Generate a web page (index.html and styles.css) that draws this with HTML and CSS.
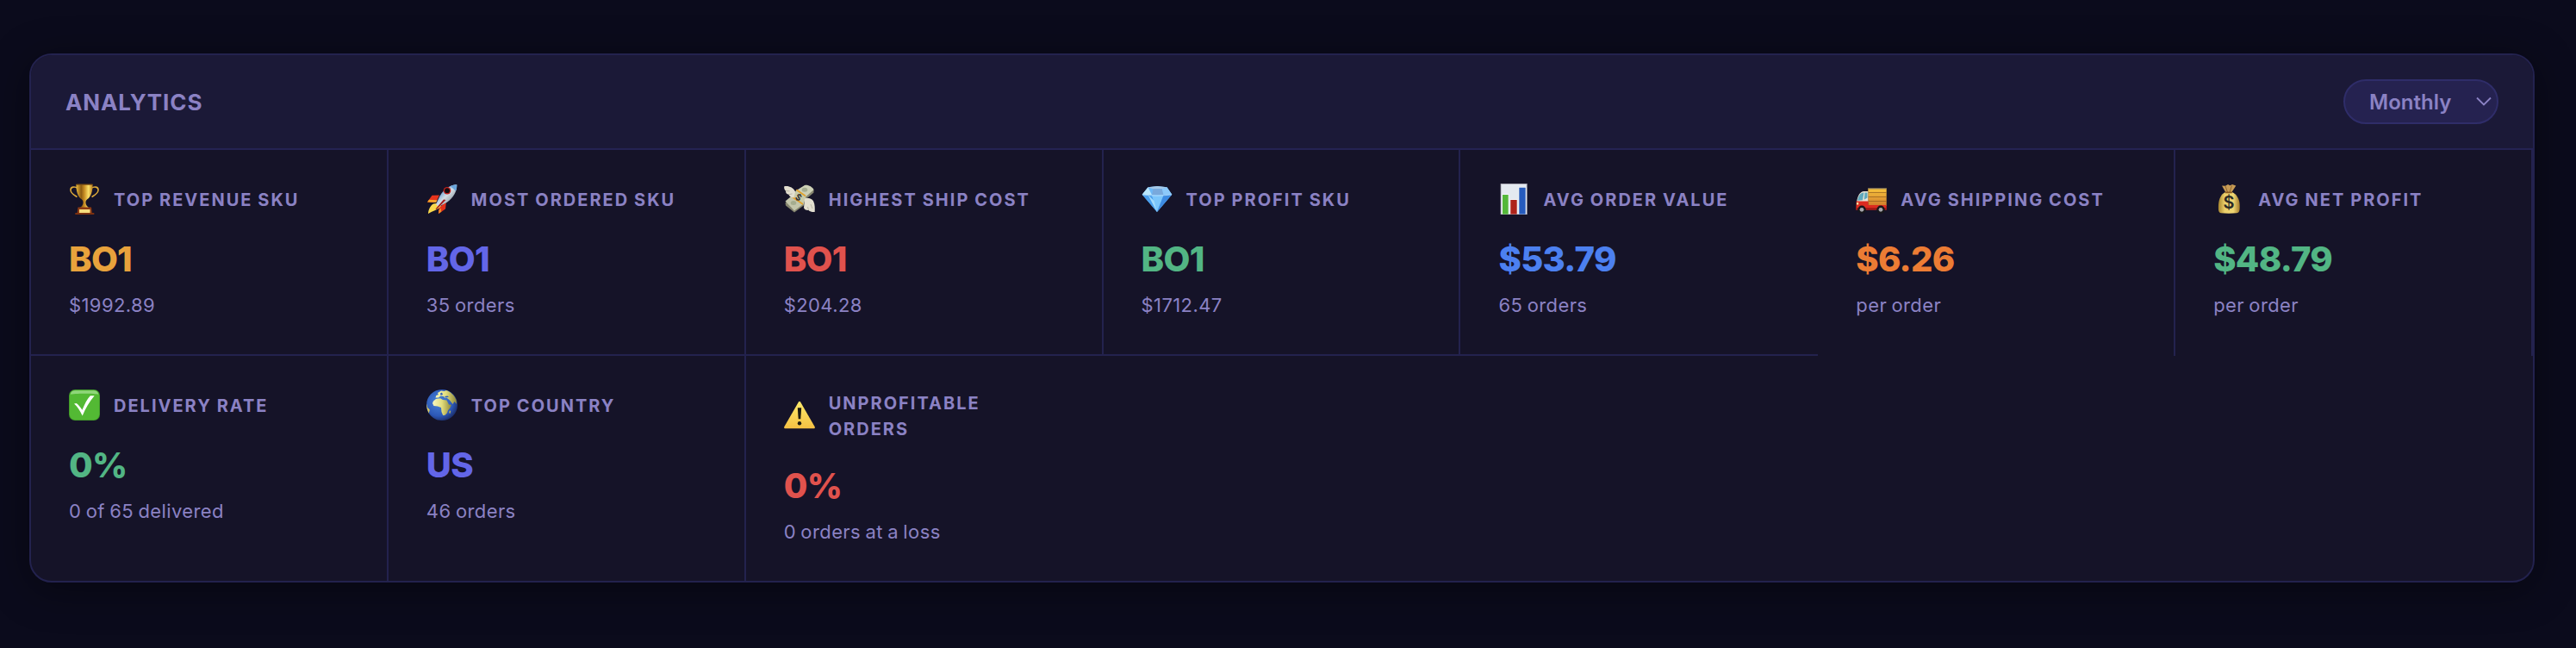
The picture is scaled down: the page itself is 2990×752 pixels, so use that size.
FILE: index.html
```
<!DOCTYPE html>
<html lang="en">
<head>
    <meta charset="UTF-8">
    <meta name="viewport" content="width=device-width, initial-scale=1.0">
    <title>Analytics</title>
    <link rel="stylesheet" href="styles.css">
</head>
<body>
    <section class="analytics-card">
        <div class="analytics-header">
            <h2>Analytics</h2>
            <select class="period-select" id="period">
                <option selected>Monthly</option>
                <option>Weekly</option>
                <option>Daily</option>
            </select>
        </div>

        <div class="analytics-grid">
            <div class="metric">
                <div class="metric-head">
                    <svg class="metric-icon" viewBox="0 0 36 36">
                        <defs>
                            <linearGradient id="gold" x1="0" x2="1" y1="0" y2="0">
                                <stop offset="0" stop-color="#e9b93c"/>
                                <stop offset=".3" stop-color="#8a5a12"/>
                                <stop offset=".5" stop-color="#c98f24"/>
                                <stop offset=".75" stop-color="#fbe06a"/>
                                <stop offset="1" stop-color="#b97c1c"/>
                            </linearGradient>
                        </defs>
                        <path d="M10 5.500C7 3 1.500 3.500 2 8c.4 3.500 3.500 5 7.500 7.500M26 5.500C29 3 34.500 3.500 34 8c-.4 3.500-3.500 5-7.500 7.500" fill="none" stroke="#dba93a" stroke-width="1.600"/>
                        <path d="M8.500 1h19c.3 8-2 14.500-6.500 17.500-1.500 1.200-1.600 2.500-1.500 4 .1 2 1.500 4 3.500 5.500H13c2-1.500 3.400-3.500 3.500-5.500.1-1.500 0-2.800-1.500-4C10.500 15.500 8.200 9 8.500 1z" fill="url(#gold)"/>
                        <path d="M8.500.5h19v1.200h-19z" fill="#7d4f12"/>
                        <path d="M10.500 27.500h15.500l.8 6.500H9.700z" fill="#8c3a14"/>
                        <path d="M12 30h12.500v4H12z" fill="#f6dc7d"/>
                        <path d="M7.300 34h22v2h-22z" fill="#7a3010"/>
                    </svg>
                    <span class="metric-label">Top Revenue SKU</span>
                </div>
                <div class="metric-value amber">BO1</div>
                <div class="metric-sub">$1992.89</div>
            </div>

            <div class="metric">
                <div class="metric-head">
                    <svg class="metric-icon" viewBox="0 0 36 36">
                        <defs>
                            <linearGradient id="hull" x1="0" x2="1" y1="0" y2="1">
                                <stop offset=".2" stop-color="#4b8fd0"/>
                                <stop offset=".5" stop-color="#d5dde4"/>
                                <stop offset=".8" stop-color="#87959f"/>
                            </linearGradient>
                        </defs>
                        <path d="M15 13.500L6.500 13.800 1 21.500l10 .5z" fill="#e8341c"/>
                        <path d="M1 21.500l2-2.800 9.500.5L11 22z" fill="#f6a62a"/>
                        <path d="M23 21l-1 8.500L14 35l.5-7z" fill="#e3301a"/>
                        <path d="M14 35l.3-4 2.500-2.500.5 4.200z" fill="#f08a27"/>
                        <path d="M8 23.500l6.500-1 2.500 3.500c-3 4.500-9 5-15 9 .2-4 2-9 6-11.500z" fill="#f9d84c"/>
                        <path d="M35.200 1.300c.5 7-3.500 14.500-11 20.200L14 27l-3-3 4.500-9.500C20.500 6.500 27 1.500 35.200 1.300z" fill="url(#hull)"/>
                        <path d="M35.200 1.300c.2 2.700-.2 5-1.200 7.500L27.800 3c2.400-1 4.600-1.600 7.400-1.700z" fill="#6aa5dc"/>
                        <circle cx="24" cy="8.200" r="4.300" fill="#c2201b"/>
                        <circle cx="24" cy="8.200" r="2.900" fill="#120c12"/>
                        <path d="M20 18.500L10.500 29.500l1.300.5L22.500 19z" fill="#a31a1c"/>
                    </svg>
                    <span class="metric-label">Most Ordered SKU</span>
                </div>
                <div class="metric-value indigo">BO1</div>
                <div class="metric-sub">35 orders</div>
            </div>

            <div class="metric">
                <div class="metric-head">
                    <svg class="metric-icon" viewBox="0 0 36 36">
                        <path d="M1.500 22.500L15 12.500 23.500 25 12 33.500 2 25.500z" fill="#85856f"/>
                        <path d="M1.500 20.500L13 11l10.500 12L12 31.500z" fill="#c3c6ab"/>
                        <path d="M13.500 9.500L24 2.300c4-.8 9 2 10.500 5.200v3L24.500 19z" fill="#85856f"/>
                        <path d="M13.500 8.500L24 2c4-.8 9 2 10.500 5.200L24.500 16z" fill="#cdd0b6"/>
                        <ellipse cx="24" cy="7.300" rx="3.300" ry="2.500" fill="#a5ad8f"/>
                        <ellipse cx="11" cy="22.500" rx="3.300" ry="2.500" fill="#a5ad8f"/>
                        <path d="M14.500 7.500l11 8.500-3 8.500L9.500 15z" fill="#c9cba9"/>
                        <path d="M14.500 7.200l10.500 7.300M9.500 15.500l12.500 8.500" stroke="#e0a12b" stroke-width="1.700"/>
                        <text class="icon-dollar" x="16.800" y="19.500" font-size="10" transform="rotate(32 16.800 16)">$</text>
                        <path d="M.3 3.200C5 2.200 10.500 4 13.200 9.500l-1.700 7C8.500 16.500 6 15 5.500 12.700 3 12.300 1.800 10.500 2 8.500.5 7.200-.2 5.200.3 3.200z" fill="#e3dfd0"/>
                        <path d="M2 8.500l4.500.3M5.500 12.700l4-.8" stroke="#a9a595" stroke-width=".7"/>
                        <path d="M24 17.500c5-1.500 9.800.5 10.500 4 1.300 2.500 1.500 7.500 1.200 11.500-3 .2-5.500-.3-7.200-2-3 .3-5-1.200-5.500-3z" fill="#e3dfd0"/>
                        <path d="M28.500 31l-1-4M33 29l-2-5" stroke="#a9a595" stroke-width=".7"/>
                    </svg>
                    <span class="metric-label">Highest Ship Cost</span>
                </div>
                <div class="metric-value red">BO1</div>
                <div class="metric-sub">$204.28</div>
            </div>

            <div class="metric">
                <div class="metric-head">
                    <svg class="metric-icon" viewBox="0 0 36 36">
                        <path d="M.7 12.700L7.500 4.300 18.300 3l11.200 1.300 5.800 8.400L18 33z" fill="#6db8f6"/>
                        <path d="M.7 12.700L7.500 4.300l4.500 8.900z" fill="#b9e6fd"/>
                        <path d="M7.500 4.300L18.300 3l11.200 1.300-5.700 1.900H13.500z" fill="#a6c9e8"/>
                        <path d="M13.500 6.200h10.300l1.800 7.300H12z" fill="#79a9dc"/>
                        <path d="M29.500 4.300l5.800 8.400-9.700.8-1.800-7.300z" fill="#8cc9fa"/>
                        <path d="M.7 12.700l11.300.8L18 33z" fill="#4a9fee"/>
                        <path d="M12 13.500h13.600L18 33z" fill="#7cc6fb"/>
                        <path d="M35.300 12.700l-9.700.8L18 33z" fill="#3d8be2"/>
                        <path d="M7.500 13.200L18 33l-3.500-13z" fill="#a4dcfd"/>
                        <path d="M1 12.900c10 1.500 24 1.500 34 0" fill="none" stroke="#d6f0ff" stroke-width=".6"/>
                    </svg>
                    <span class="metric-label">Top Profit SKU</span>
                </div>
                <div class="metric-value green">BO1</div>
                <div class="metric-sub">$1712.47</div>
            </div>

            <div class="metric">
                <div class="metric-head">
                    <svg class="metric-icon" viewBox="0 0 36 36">
                        <rect x="2.700" y="0" width="31" height="36" fill="#a9a9b4"/>
                        <rect x="3.500" y="1" width="29.300" height="34.200" fill="#e4e9f0"/>
                        <rect x="4.300" y="12.300" width="8" height="23" fill="#f8fafc"/>
                        <rect x="13.700" y="18.300" width="8.600" height="17" fill="#f8fafc"/>
                        <rect x="23.700" y="4" width="8.600" height="31.500" fill="#f8fafc"/>
                        <rect x="5" y="13" width="6.700" height="22.600" fill="#54b83a"/>
                        <rect x="14.300" y="19" width="7.400" height="16.600" fill="#ae231b"/>
                        <rect x="24.300" y="4.700" width="7.400" height="30.900" fill="#265bbd"/>
                    </svg>
                    <span class="metric-label">Avg Order Value</span>
                </div>
                <div class="metric-value blue">$53.79</div>
                <div class="metric-sub">65 orders</div>
            </div>

            <div class="metric">
                <div class="metric-head">
                    <svg class="metric-icon" viewBox="0 0 36 36">
                        <defs>
                            <linearGradient id="cargo" x1="0" x2="0" y1="0" y2="1">
                                <stop offset="0" stop-color="#f9c53d"/>
                                <stop offset="1" stop-color="#cf7d2c"/>
                            </linearGradient>
                        </defs>
                        <rect x="14.300" y="5.300" width="21.400" height="20.700" fill="url(#cargo)"/>
                        <path d="M14.300 5.800h21.400" stroke="#5f5a63" stroke-width="1"/>
                        <path d="M14.300 10.500h21.400M14.300 15.500h21.400M14.300 20.500h21.400" stroke="#8f5a1e" stroke-width=".7"/>
                        <path d="M14.300 9H9.500C5 9.500 2.500 13 1 21.500h13.300z" fill="#e9e4d3"/>
                        <path d="M8.500 10.500C5 11.200 3.300 14.500 2 19.800l6-.6 1.500-8.700zM10.500 10.500h3v6l-3.800 2.200z" fill="#5fa9bd"/>
                        <path d="M.7 20.500h13.800V25h21.200v5.500H.3z" fill="#dc2b20"/>
                        <path d="M.3 28.300h35.400v2.200H.3z" fill="#9f1714"/>
                        <rect x="1" y="22" width="2.200" height="2.500" fill="#f8e9a0"/>
                        <circle cx="7" cy="30.300" r="4.700" fill="#17171b"/>
                        <circle cx="7" cy="30.300" r="2.400" fill="#a5a5aa"/>
                        <circle cx="29" cy="30.300" r="4.700" fill="#17171b"/>
                        <circle cx="29" cy="30.300" r="2.400" fill="#a5a5aa"/>
                    </svg>
                    <span class="metric-label">Avg Shipping Cost</span>
                </div>
                <div class="metric-value orange">$6.26</div>
                <div class="metric-sub">per order</div>
            </div>

            <div class="metric">
                <div class="metric-head">
                    <svg class="metric-icon" viewBox="0 0 36 36">
                        <defs>
                            <linearGradient id="bag" x1="0" x2="1" y1="0" y2="0">
                                <stop offset="0" stop-color="#a8862f"/>
                                <stop offset=".3" stop-color="#ecd06b"/>
                                <stop offset=".7" stop-color="#f0d673"/>
                                <stop offset="1" stop-color="#a27a2b"/>
                            </linearGradient>
                        </defs>
                        <path d="M10 2.500l4 .2L17 1l2.500 1.300L22 1l4.300 1.500-4.800 7.500h-7.300z" fill="#c79b55"/>
                        <path d="M14 3l2.500 7M21.500 2.500L19 10" stroke="#7f5a26" stroke-width=".8"/>
                        <path d="M14 10h7.800c5.200 2 8.700 8 8.900 15 .1 6-.2 9-3.700 9.300-6 .5-12 .5-18 0C6 34 5.700 31 6 25c.4-7 3-13 8-15z" fill="url(#bag)"/>
                        <path d="M13.700 9.500h8.200v1.700h-8.200z" fill="#8a5a22"/>
                        <text class="icon-dollar" x="18.100" y="29.300" font-size="20">$</text>
                    </svg>
                    <span class="metric-label">Avg Net Profit</span>
                </div>
                <div class="metric-value green">$48.79</div>
                <div class="metric-sub">per order</div>
            </div>

            <div class="metric">
                <div class="metric-head">
                    <svg class="metric-icon" viewBox="0 0 36 36">
                        <rect width="36" height="36" rx="7" fill="#3f9428"/>
                        <rect x=".8" y=".8" width="34.400" height="34.400" rx="6.300" fill="#53b934"/>
                        <path d="M7 1.300h22c3 0 5 2 5.300 4.500C31 4.300 5 4.300 1.700 5.800 2 3.300 4 1.300 7 1.300z" fill="#8fd67a"/>
                        <path d="M6 16.500l2.700-.5c2.500 2 4.800 4.700 6.700 7.700C18.500 16.500 21 11.500 24.800 7.300h4.800C23.500 14.500 19.500 21.500 15.700 30.500 12.700 24.500 10 20 6 16.500z" fill="#fff"/>
                    </svg>
                    <span class="metric-label">Delivery Rate</span>
                </div>
                <div class="metric-value green">0%</div>
                <div class="metric-sub">0 of 65 delivered</div>
            </div>

            <div class="metric">
                <div class="metric-head">
                    <svg class="metric-icon" viewBox="0 0 36 36">
                        <defs>
                            <radialGradient id="sea" cx=".4" cy=".4" r=".65">
                                <stop offset="0" stop-color="#4a86d8"/>
                                <stop offset=".7" stop-color="#2c58b8"/>
                                <stop offset="1" stop-color="#1a2c66"/>
                            </radialGradient>
                            <linearGradient id="land" x1="0" x2="1" y1="0" y2="0">
                                <stop offset="0" stop-color="#f7f8c0"/>
                                <stop offset=".5" stop-color="#e2dd7c"/>
                                <stop offset="1" stop-color="#8c8638"/>
                            </linearGradient>
                        </defs>
                        <circle cx="18" cy="18" r="18" fill="url(#sea)"/>
                        <path d="M8 13.500l3-2.500 5-.8 3 1.800 4.500.5 2.500 5 3 .2-1.500 3.500-2.500 3-1 3-2.500 2.500-2.300.3-1.700-4-.5-5-4-1.500-4.500-.5-1.500-3z" fill="url(#land)"/>
                        <path d="M10.500 9.500l.8-2.500 2.500-1L13 4l4-2.500 3.500.5L23 1c5.500 2 9.500 6 11.500 11l.5 5-2.500-3-2 3-3.500-4.500-3-2.500-3-.5-1-1.500-3.500-.5-2.500 2z" fill="url(#land)"/>
                        <path d="M16 4.500l2-1 1 2.500-2.500.8zM21 8l3.500-.5 1.500 1.200-3.500.8z" fill="#2f5fb8"/>
                        <path d="M.3 16.500l1 4.500 2.500 2.500-1 4C.8 24 0 20 .3 16.500z" fill="#dcc95c"/>
                        <path d="M27 24.300l1.200 1-.8 2.700-1.200-1z" fill="#c2b850"/>
                    </svg>
                    <span class="metric-label">Top Country</span>
                </div>
                <div class="metric-value indigo">US</div>
                <div class="metric-sub">46 orders</div>
            </div>

            <div class="metric">
                <div class="metric-head">
                    <svg class="metric-icon" viewBox="0 0 36 36">
                        <defs>
                            <linearGradient id="warn" x1="0" x2="0" y1="0" y2="1">
                                <stop offset="0" stop-color="#fdea6b"/>
                                <stop offset="1" stop-color="#f5c043"/>
                            </linearGradient>
                        </defs>
                        <path d="M16.900 2.500c.6-1 1.600-1 2.200 0l16.600 28.700c.5 1.200 0 2.100-1.200 2.100h-33C.3 33.300-.2 32.400.3 31.200z" fill="url(#warn)"/>
                        <path d="M15.800 9.300h4.400l-.9 12.900h-2.600z" fill="#1d1a10"/>
                        <circle cx="18" cy="27.300" r="2.200" fill="#1d1a10"/>
                    </svg>
                    <span class="metric-label">Unprofitable<br>Orders</span>
                </div>
                <div class="metric-value red">0%</div>
                <div class="metric-sub">0 orders at a loss</div>
            </div>
        </div>
    </section>
</body>
</html>
```
FILE: styles.css
```
* {
    box-sizing: border-box;
}
body {
    font-family: Inter, "Liberation Sans", sans-serif;
    background-color: #0b0b1c;
    color: #8b82c4;
    margin: 0;
    padding: 62px 48px 0 34px;
    min-height: 752px;
}
.analytics-card {
    background-color: #151328;
    border: 2px solid #23224e;
    border-radius: 26px;
    overflow: hidden;
    box-shadow: 0 8px 48px rgba(0, 0, 0, 0.4);
}
.analytics-header {
    display: flex;
    align-items: center;
    justify-content: space-between;
    padding: 28px 40px;
    background-color: #1b1937;
    border-bottom: 2px solid #252353;
}
.analytics-header h2 {
    margin: 0;
    font-size: 26px;
    font-weight: 700;
    letter-spacing: 0.9px;
    text-transform: uppercase;
}
.period-select {
    appearance: none;
    width: 180px;
    height: 52px;
    padding: 0 40px 0 28px;
    font-family: inherit;
    font-size: 24px;
    font-weight: 600;
    color: #8b82c4;
    border: 2px solid #2f2d69;
    border-radius: 26px;
    background: #252250 url("data:image/svg+xml,%3Csvg xmlns='http://www.w3.org/2000/svg' width='18' height='12' viewBox='0 0 18 12' fill='none' stroke='%238b82c4' stroke-width='1.8'%3E%3Cpath d='M1 1.500l8 8 8-8'/%3E%3C/svg%3E") no-repeat right 6px center;
}
.analytics-grid {
    display: grid;
    grid-template-columns: repeat(7, 1fr);
}
.metric {
    padding: 40px 44px;
    border-right: 2px solid #23224e;
    border-bottom: 2px solid #23224e;
}
.metric:nth-child(5n) {
    border-right: none;
}
.metric:nth-last-child(-n+5) {
    border-bottom: none;
}
.metric-head {
    display: flex;
    align-items: center;
    gap: 16px;
    margin-bottom: 28px;
}
.metric-icon {
    width: 36px;
    height: 36px;
    flex-shrink: 0;
    transform: translateY(-1px);
}
.icon-dollar {
    fill: #2b2a26;
    font-weight: 600;
    text-anchor: middle;
}
.metric-label {
    font-size: 20px;
    font-weight: 700;
    line-height: 30px;
    letter-spacing: 2px;
    word-spacing: -0.8px;
    text-transform: uppercase;
}
.metric-value {
    font-size: 40px;
    font-weight: 800;
    line-height: 46px;
    letter-spacing: -0.7px;
    margin-bottom: 14px;
}
.metric-sub {
    font-size: 22px;
    line-height: 33px;
    letter-spacing: 0.4px;
    word-spacing: -1.2px;
}
.amber {
    color: #e8a23c;
}
.indigo {
    color: #6366e8;
}
.red {
    color: #e0524d;
}
.green {
    color: #52b584;
}
.blue {
    color: #4c80f0;
}
.orange {
    color: #ec7c34;
}
```
